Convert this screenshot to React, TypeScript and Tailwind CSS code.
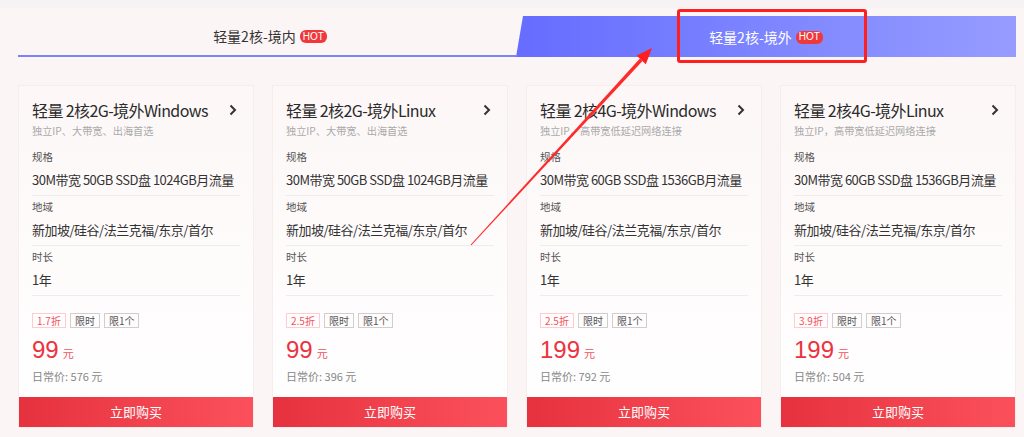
import React from "react";

type Plan = {
  title: string;
  sub: string;
  spec: string;
  discount: string;
  price: string;
  normal: string;
};

const plans: Plan[] = [
  {
    title: "轻量 2核2G-境外Windows",
    sub: "独立IP、大带宽、出海首选",
    spec: "30M带宽 50GB SSD盘 1024GB月流量",
    discount: "1.7折",
    price: "99",
    normal: "576",
  },
  {
    title: "轻量 2核2G-境外Linux",
    sub: "独立IP、大带宽、出海首选",
    spec: "30M带宽 50GB SSD盘 1024GB月流量",
    discount: "2.5折",
    price: "99",
    normal: "396",
  },
  {
    title: "轻量 2核4G-境外Windows",
    sub: "独立IP，高带宽低延迟网络连接",
    spec: "30M带宽 60GB SSD盘 1536GB月流量",
    discount: "2.5折",
    price: "199",
    normal: "792",
  },
  {
    title: "轻量 2核4G-境外Linux",
    sub: "独立IP，高带宽低延迟网络连接",
    spec: "30M带宽 60GB SSD盘 1536GB月流量",
    discount: "3.9折",
    price: "199",
    normal: "504",
  },
];

function Hot() {
  return (
    <span className="ml-[4px] inline-flex h-[13px] items-center rounded-[6px] bg-[#f0383c] px-[3px] text-[10px] leading-none text-white [font-family:'Liberation_Sans',sans-serif]">
      HOT
    </span>
  );
}

function Section({ label, value }: { label: string; value: string }) {
  return (
    <div className="border-b border-[#ededed] pt-[3px] pb-[5px]">
      <div className="text-[10.5px] leading-[16px] text-[#555]">{label}</div>
      <div className="mt-[5px] whitespace-nowrap text-[13px] leading-[20px] tracking-[-0.5px] text-[#333]">{value}</div>
    </div>
  );
}

function Card({ p }: { p: Plan }) {
  return (
    <div className="flex w-[236px] flex-col border border-[#f6eded] bg-gradient-to-b from-[#fdf7f7] to-white">
      <div className="px-[13px] pt-[13px] pb-[13px]">
        <div className="flex items-center justify-between">
          <div className="whitespace-nowrap text-[16px] leading-[22px] tracking-[-0.6px] text-[#2b2b2b]">{p.title}</div>
          <svg width="8" height="12" viewBox="0 0 8 12" className="mr-[3px]">
            <polyline points="1.5,1.5 6,6 1.5,10.5" fill="none" stroke="#333" strokeWidth="2" />
          </svg>
        </div>
        <div className="mt-[2px] whitespace-nowrap text-[10.2px] leading-[16px] text-[#aaa]">{p.sub}</div>
        <div className="mt-[7px]">
          <Section label="规格" value={p.spec} />
          <Section label="地域" value="新加坡/硅谷/法兰克福/东京/首尔" />
          <Section label="时长" value="1年" />
        </div>
        <div className="mt-[17px] flex gap-[4px]">
          <span className="flex h-[15px] items-center border border-[#ffcdd0] px-[4px] text-[10px] text-[#f2535e]">
            {p.discount}
          </span>
          <span className="flex h-[15px] items-center border border-[#cfcfcf] px-[4px] text-[10px] text-[#555]">
            限时
          </span>
          <span className="flex h-[15px] items-center border border-[#cfcfcf] px-[4px] text-[10px] text-[#555]">
            限1个
          </span>
        </div>
        <div className="mt-[8px] flex h-[28px] items-baseline">
          <span className="text-[24px] leading-[28px] text-[#ec3340] [font-family:'Liberation_Sans',sans-serif]">{p.price}</span>
          <span className="ml-[4px] text-[11px] text-[#f0505b]">元</span>
        </div>
        <div className="mt-[4px] text-[11px] leading-[16px] text-[#888]">日常价: {p.normal} 元</div>
      </div>
      <button className="h-[30px] w-full bg-gradient-to-r from-[#e6313e] to-[#fb505c] text-[13px] text-white">
        立即购买
      </button>
    </div>
  );
}

export default function App() {
  return (
    <div className="relative h-[437px] w-[1024px] overflow-hidden bg-[#fcf5f5] [font-family:'Noto_Sans_CJK_SC','Noto_Sans',sans-serif]">
      <div className="h-[8px] bg-[#f7f3f4]" />
      <div className="ml-[18px] w-[998px]">
        <div className="mt-[8px] flex h-[41px]">
          <div className="flex flex-1 items-center justify-center border-b-2 border-[#7c82f8] pt-[2px] pl-[6px]">
            <span className="text-[14px] text-[#333]">轻量2核-境内</span>
            <Hot />
          </div>
          <div className="flex w-[500px] items-center justify-center bg-gradient-to-r from-[#666cff] to-[#969cff] pt-[1px] [clip-path:polygon(7px_0,100%_0,100%_100%,0_100%)]">
            <span className="text-[14px] text-white">轻量2核-境外</span>
            <Hot />
          </div>
        </div>
        <div className="mt-[28px] flex gap-[18px]">
          {plans.map((p, i) => (
            <Card key={i} p={p} />
          ))}
        </div>
      </div>

      <div className="pointer-events-none absolute left-[677px] top-[9px] h-[54px] w-[190px] rounded-[3px] border-[3px] border-[#ff1f1f]" />
      <svg className="pointer-events-none absolute left-0 top-0" width="1024" height="437" viewBox="0 0 1024 437">
        <polygon points="471.4,245.3 470.6,244.7 639.9,58.6 642.5,61.0" fill="#ff2a2a" />
        <polygon points="652,48 645.8,64.2 636.6,55.6" fill="#ff1f1f" />
      </svg>
    </div>
  );
}
